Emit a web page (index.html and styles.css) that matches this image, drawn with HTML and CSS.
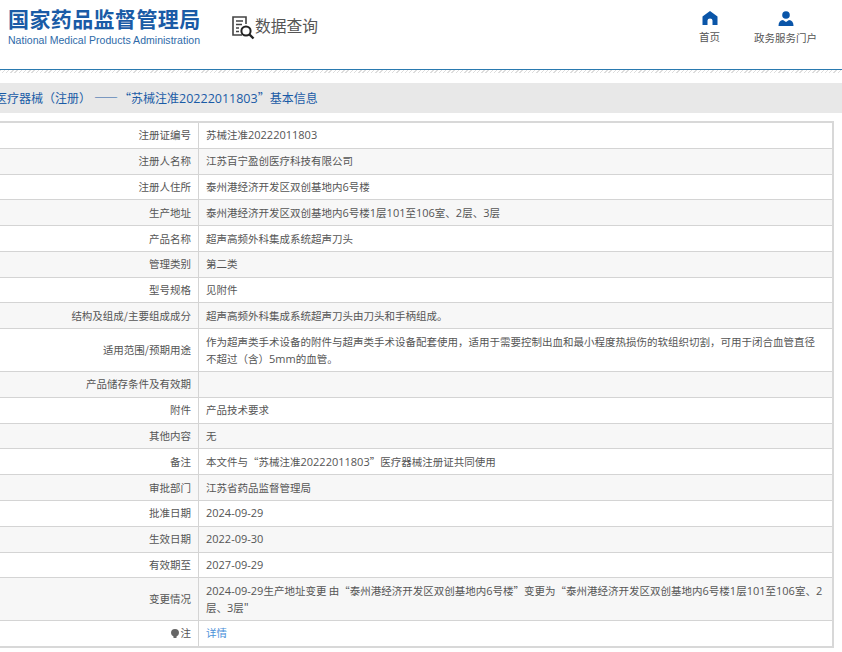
FILE: index.html
```html
<!DOCTYPE html>
<html lang="zh-CN">

<head>
    <meta charset="utf-8">
    <title>数据查询</title>
    <link rel="stylesheet" href="styles.css">
</head>

<body>

    <header class="top">
        <div class="logo">
            <div class="logo_cn">国家药品监督管理局</div>
            <div class="logo_en">National Medical Products Administration</div>
        </div>
        <div class="query">
            <svg class="query_icon" width="24" height="26" viewBox="0 0 24 26">
                <path d="M11 20H2V2h13v7" fill="none" stroke="#444" stroke-width="1.6"/>
                <path d="M5 6h7M5 9.500h6M5 13h3M5 16.500h3" fill="none" stroke="#444" stroke-width="1.3"/>
                <circle cx="15" cy="16" r="4.600" fill="none" stroke="#222" stroke-width="2"/>
                <path d="M18.500 19.500l4 4" fill="none" stroke="#222" stroke-width="2.400"/>
            </svg>
            <span>数据查询</span>
        </div>
        <nav class="links">
            <a class="link link_home">
                <svg width="16" height="14" viewBox="0 0 16 14">
                    <path d="M8 0L0.500 5.500V14H5.500V9.500Q5.500 7.500 8 7.500Q10.500 7.500 10.500 9.500V14H15.500V5.500Z" fill="#0a55a8"/>
                </svg>
                <span>首页</span>
            </a>
            <a class="link link_gov">
                <svg width="16" height="15" viewBox="0 0 16 15">
                    <circle cx="8" cy="4" r="3.800" fill="#0a55a8"/>
                    <path d="M0.500 15Q0.500 9.500 5 9L8 11L11 9Q15.500 9.500 15.500 15Z" fill="#0a55a8"/>
                </svg>
                <span>政务服务门户</span>
            </a>
        </nav>
    </header>

    <div class="rule"></div>

    <h2 class="title">医疗器械（注册）<span class="dash">——</span>“苏械注准<span class="n">20222011803</span>”基本信息</h2>

    <table class="info">
        <tr><th>注册证编号</th><td>苏械注准<span class="n">20222011803</span></td></tr>
        <tr><th>注册人名称</th><td>江苏百宁盈创医疗科技有限公司</td></tr>
        <tr><th>注册人住所</th><td>泰州港经济开发区双创基地内<span class="n">6</span>号楼</td></tr>
        <tr><th>生产地址</th><td>泰州港经济开发区双创基地内<span class="n">6</span>号楼<span class="n">1</span>层<span class="n">101</span>至<span class="n">106</span>室、<span class="n">2</span>层、<span class="n">3</span>层</td></tr>
        <tr><th>产品名称</th><td>超声高频外科集成系统超声刀头</td></tr>
        <tr><th>管理类别</th><td>第二类</td></tr>
        <tr><th>型号规格</th><td>见附件</td></tr>
        <tr><th>结构及组成/主要组成成分</th><td>超声高频外科集成系统超声刀头由刀头和手柄组成。</td></tr>
        <tr><th>适用范围/预期用途</th><td>作为超声类手术设备的附件与超声类手术设备配套使用，适用于需要控制出血和最小程度热损伤的软组织切割，可用于闭合血管直径不超过（含）<span class="n">5mm</span>的血管。</td></tr>
        <tr><th>产品储存条件及有效期</th><td></td></tr>
        <tr><th>附件</th><td>产品技术要求</td></tr>
        <tr><th>其他内容</th><td>无</td></tr>
        <tr><th>备注</th><td>本文件与“苏械注准<span class="n">20222011803</span>”医疗器械注册证共同使用</td></tr>
        <tr><th>审批部门</th><td>江苏省药品监督管理局</td></tr>
        <tr><th>批准日期</th><td><span class="n">2024-09-29</span></td></tr>
        <tr><th>生效日期</th><td><span class="n">2022-09-30</span></td></tr>
        <tr><th>有效期至</th><td><span class="n">2027-09-29</span></td></tr>
        <tr><th>变更情况</th><td><span class="n">2024-09-29</span>生产地址变更 由“泰州港经济开发区双创基地内<span class="n">6</span>号楼”变更为“泰州港经济开发区双创基地内<span class="n">6</span>号楼<span class="n">1</span>层<span class="n">101</span>至<span class="n">106</span>室、<span class="n">2</span>层、<span class="n">3</span>层"</td></tr>
        <tr>
            <th>
                <svg class="pin" width="8" height="9" viewBox="0 0 8 9">
                    <path d="M4 0A4 4 0 0 1 8 4Q8 6 5.500 7.500V9H2.500V7.500Q0 6 0 4A4 4 0 0 1 4 0Z" fill="#666"/>
                </svg>注
            </th>
            <td><a class="more">详情</a></td>
        </tr>
    </table>

</body>

</html>
```

FILE: styles.css
```css
html, body {
    overflow: hidden;
}

body {
    margin: 0;
    width: 842px;
    height: 652px;
    background: #fff;
    font-family: "Noto Sans CJK SC", "Noto Sans", sans-serif;
    font-size: 10.500px;
    color: #555;
}

.n {
    font-family: "Open Sans", sans-serif;
    font-size: 11px;
}

.top {
    display: flex;
    height: 69px;
}

.logo {
    margin: 5px 0 0 8px;
    width: 214px;
}

.logo_cn {
    font-size: 21px;
    font-weight: 700;
    line-height: 26px;
    color: #1a5ba6;
    letter-spacing: 0.400px;
}

.logo_en {
    font-family: "Liberation Sans", sans-serif;
    font-size: 10.500px;
    line-height: 14px;
    margin-top: 2px;
    letter-spacing: 0.030px;
    color: #2e6aa8;
}

.query {
    display: flex;
    align-items: center;
    height: 50px;
    margin-left: 9px;
    font-size: 15.750px;
    color: #555;
}

.query_icon {
    margin-top: 6px;
}

.links {
    margin-left: auto;
    display: flex;
    padding: 11px 25px 0 0;
}

.link {
    display: flex;
    flex-direction: column;
    align-items: center;
    color: #555;
    font-size: 10.500px;
    line-height: 15px;
}

.link svg {
    margin-bottom: 4px;
}

.link_home {
    margin-right: 34px;
}

.rule {
    height: 3px;
    border-top: 1px solid #2a7ab0;
    background: repeating-linear-gradient(135deg, #ddd 0 1px, #fff 1px 3px);
}

.title {
    margin: 10px 0 0 -5px;
    height: 30px;
    background: #e8e8e8;
    color: #1a5ba6;
    font-size: 12px;
    font-weight: 400;
    line-height: 30px;
    white-space: nowrap;
}

.title .n {
    font-size: 12.500px;
}

.dash {
    margin: 0 1px 0 3px;
}

.info {
    margin: 8px 0 0 -10px;
    width: 844px;
    table-layout: fixed;
    border-collapse: collapse;
    border: 2px solid #d8d8d8;
}

.info th, .info td {
    border: 1px solid #d4d4d4;
    padding: 3.400px 7px 4.400px;
    line-height: 17px;
    font-weight: 400;
}

.info th {
    width: 192px;
    text-align: right;
}

.info td {
    text-align: left;
}

.info tr:nth-child(even) {
    background: #f7f7f7;
}

.pin {
    margin-right: 2px;
    vertical-align: -1px;
}

.more {
    color: #4a90d9;
}
```
